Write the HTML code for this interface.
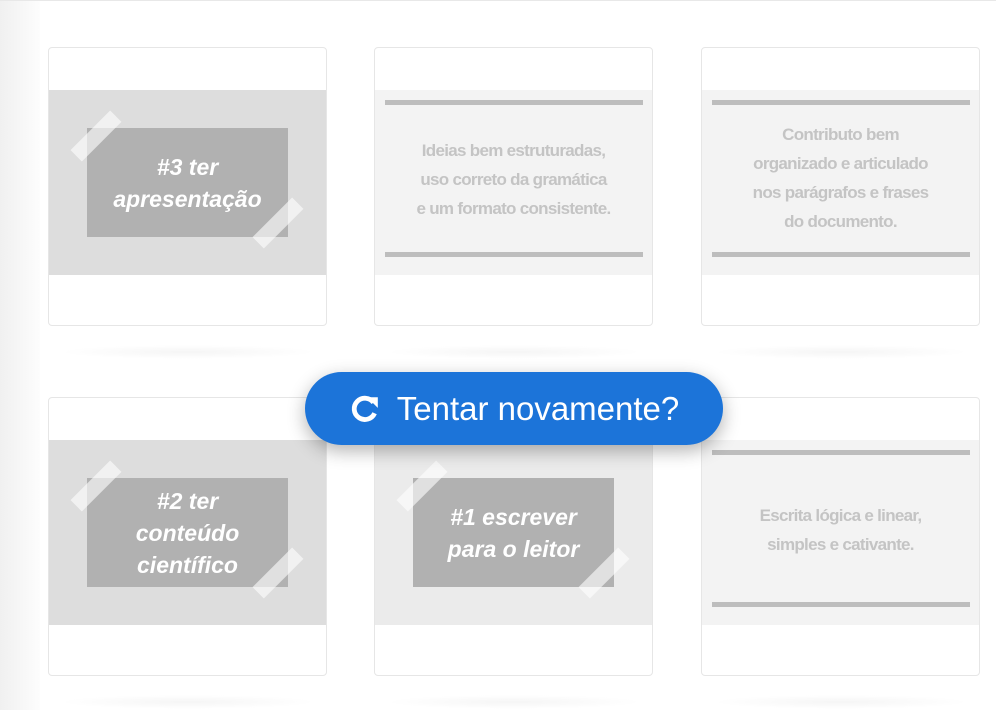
<!DOCTYPE html>
<html><head><meta charset="utf-8"><style>
html,body{margin:0;padding:0;width:996px;height:710px;overflow:hidden;background:#fff;font-family:"Liberation Sans",sans-serif}
.lg{position:absolute;left:0;top:0;width:40px;height:710px;background:linear-gradient(to right,#f0f0f0,#fdfdfd)}
.topline{position:absolute;left:0;top:0;width:996px;height:1px;background:#e8e8e8}
.card{position:absolute;width:277px;height:277px;border:1px solid #e6e6e6;border-radius:4px;background:#fff;overflow:visible}
.sh{position:absolute;width:260px;height:14px;border-radius:50%;background:radial-gradient(ellipse at center,rgba(0,0,0,0.04),rgba(0,0,0,0) 70%)}
.img{position:absolute;left:0;top:42px;width:277px;height:185px;overflow:hidden}
.box{position:absolute;left:38px;top:38px;width:201px;height:109px;background:#b1b1b1;color:#fff;font-weight:bold;font-style:italic;font-size:23px;line-height:32px;text-align:center;display:flex;align-items:center;justify-content:center;font-family:"Liberation Sans",sans-serif}
.tape{position:absolute;width:56px;height:16px;background:rgba(255,255,255,0.6);transform:rotate(-45deg)}
.ln{position:absolute;left:10px;width:258px;height:5px;background:#bdbdbd}
.tx{position:absolute;left:0;width:277px;text-align:center;color:#c4c4c4;font-weight:bold;font-size:17px;line-height:29px;letter-spacing:-0.7px}
.btn{position:absolute;left:305px;top:372px;width:418px;height:73px;border-radius:37px;background:#1c74d9;box-shadow:0 6px 18px rgba(0,0,0,0.3);color:#fff;font-size:33px;display:flex;align-items:center;justify-content:center}
</style></head><body>
<div class="lg"></div><div class="topline"></div>
<div class="sh" style="left:58px;top:345px"></div>
<div class="sh" style="left:384px;top:345px"></div>
<div class="sh" style="left:711px;top:345px"></div>
<div class="sh" style="left:58px;top:695px"></div>
<div class="sh" style="left:384px;top:695px"></div>
<div class="sh" style="left:711px;top:695px"></div>

<div class="card" style="left:48px;top:47px"><div class="img" style="background:#dddddd">
<div class="box">#3 ter<br>apresentação</div>
<div class="tape" style="left:19px;top:38px"></div><div class="tape" style="left:201px;top:125px"></div></div></div>

<div class="card" style="left:374px;top:47px"><div class="img" style="background:#f3f3f3">
<div class="ln" style="top:10px"></div>
<div class="tx" style="top:46px">Ideias bem estruturadas,<br>uso correto da gramática<br>e um formato consistente.</div>
<div class="ln" style="top:162px"></div></div></div>

<div class="card" style="left:701px;top:47px"><div class="img" style="background:#f3f3f3">
<div class="ln" style="top:10px"></div>
<div class="tx" style="top:30px">Contributo bem<br>organizado e articulado<br>nos parágrafos e frases<br>do documento.</div>
<div class="ln" style="top:162px"></div></div></div>

<div class="card" style="left:48px;top:397px"><div class="img" style="background:#dddddd">
<div class="box">#2 ter<br>conteúdo<br>científico</div>
<div class="tape" style="left:19px;top:38px"></div><div class="tape" style="left:201px;top:125px"></div></div></div>

<div class="card" style="left:374px;top:397px"><div class="img" style="background:#ebebeb">
<div class="box">#1 escrever<br>para o leitor</div>
<div class="tape" style="left:19px;top:38px"></div><div class="tape" style="left:201px;top:125px"></div></div></div>

<div class="card" style="left:701px;top:397px"><div class="img" style="background:#f3f3f3">
<div class="ln" style="top:10px"></div>
<div class="tx" style="top:61px">Escrita lógica e linear,<br>simples e cativante.</div>
<div class="ln" style="top:162px"></div></div></div>

<div class="btn"><svg width="32" height="32" viewBox="0 0 30 30" style="margin-right:16px"><path d="M23 9 A10 10 0 1 0 24 19" fill="none" stroke="#fff" stroke-width="4.5" stroke-linecap="butt"/><path d="M17 4 L27 4 L27 14 Z" fill="#fff"/></svg>Tentar novamente?</div>
</body></html>
